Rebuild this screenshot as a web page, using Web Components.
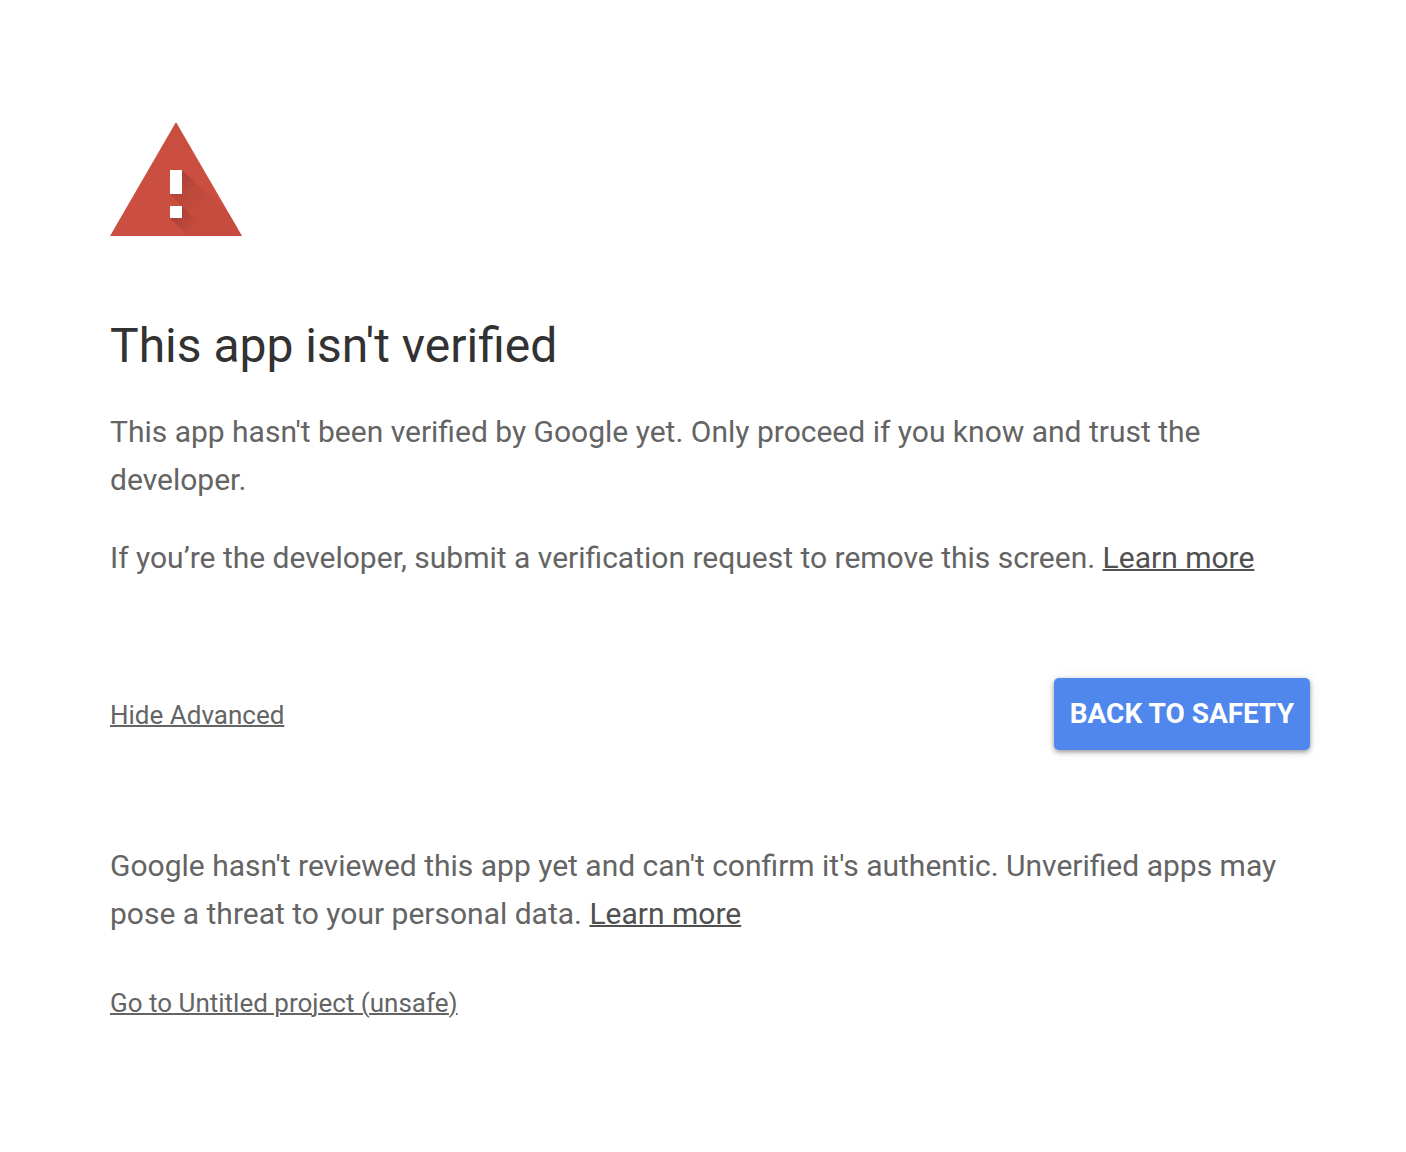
<!DOCTYPE html>
<html lang="en">
<head>
<meta charset="utf-8">
<meta name="viewport" content="width=device-width, initial-scale=1">
<title>This app isn't verified</title>
<style>
  body { margin: 0; background: #fff; color: #646464; font: 30px/48px Roboto, "Liberation Sans", sans-serif; }
</style>
</head>
<body>
<warning-page>
  <warning-icon slot="icon"></warning-icon>
  <span slot="title">This app isn't verified</span>
  <text-block>This app hasn't been verified by Google yet. Only proceed if you know and trust the developer.</text-block>
  <text-block>If you’re the developer, submit a verification request to remove this screen. <text-link>Learn more</text-link></text-block>
  <action-bar slot="actions">
    <text-toggle>Hide Advanced</text-toggle>
    <primary-button slot="primary">BACK TO SAFETY</primary-button>
  </action-bar>
  <text-block slot="details">Google hasn't reviewed this app yet and can't confirm it's authentic. Unverified apps may pose a threat to your personal data. <text-link>Learn more</text-link></text-block>
  <text-link slot="proceed" class="small">Go to Untitled project (unsafe)</text-link>
</warning-page>
<script>
const define = (name, html) => {
  const template = document.createElement('template');
  template.innerHTML = html;
  customElements.define(name, class extends HTMLElement {
    constructor() {
      super();
      this.attachShadow({ mode: 'open' }).append(template.content.cloneNode(true));
    }
  });
};

define('warning-page', `
  <style>
    :host { display: block; }
    main { display: flex; flex-direction: column; max-width: 1200px; padding: 122px 96px 110px 110px; }
    h1 { margin: 80px 0 32px; color: #323232; font-size: 48px; line-height: 60px; font-weight: 400; }
    .copy { display: flex; flex-direction: column; gap: 30px; }
    .actions { margin: 96px 0 92px; }
    .proceed { margin-top: 40px; }
  </style>
  <main>
    <slot name="icon"></slot>
    <h1><slot name="title"></slot></h1>
    <div class="copy"><slot></slot></div>
    <div class="actions"><slot name="actions"></slot></div>
    <slot name="details"></slot>
    <div class="proceed"><slot name="proceed"></slot></div>
  </main>`);

define('warning-icon', `
  <style>:host { display: block; } svg { display: block; }</style>
  <svg width="132" height="114" viewBox="0 0 132 114" role="img" aria-label="Warning">
    <defs>
      <linearGradient id="bar" gradientUnits="userSpaceOnUse" x1="66" y1="60" x2="90" y2="84">
        <stop offset="0" stop-color="#9f3d31" stop-opacity=".65"/>
        <stop offset=".3" stop-color="#a84034" stop-opacity=".55"/>
        <stop offset="1" stop-color="#b64336" stop-opacity=".25"/>
      </linearGradient>
      <linearGradient id="dot" gradientUnits="userSpaceOnUse" x1="66" y1="90" x2="84" y2="108">
        <stop offset="0" stop-color="#963a2f" stop-opacity=".75"/>
        <stop offset="1" stop-color="#b64336" stop-opacity=".25"/>
      </linearGradient>
    </defs>
    <path fill="#ca4f40" d="M66 0L132 114H0z"/>
    <path fill="url(#bar)" d="M72 48L120 93L132 114H102L60 72z"/>
    <path fill="url(#dot)" d="M72 84L102 114H78L60 96z"/>
    <path fill="#fff" d="M60 48h12v24H60zM60 84h12v12H60z"/>
  </svg>`);

define('text-block', `
  <style>:host { display: block; } p { margin: 0; }</style>
  <p><slot></slot></p>`);

define('text-link', `
  <style>
    :host { display: inline; color: #505050; }
    :host(.small) { font-size: 26px; color: #646464; }
    a { color: inherit; text-decoration: underline; text-decoration-thickness: 2px; }
  </style>
  <a href="#"><slot></slot></a>`);

define('text-toggle', `
  <style>
    :host { display: block; }
    button { padding: 0; border: 0; background: none; color: inherit; font: inherit; font-size: 26px; text-decoration: underline; text-decoration-thickness: 2px; cursor: pointer; }
  </style>
  <button type="button"><slot></slot></button>`);

define('primary-button', `
  <style>
    :host { display: block; }
    button { display: block; padding: 12px 16px; border: 0; border-radius: 5px; background: #5087ec; color: #fff; font: inherit; font-size: 28px; font-weight: 700; white-space: nowrap; box-shadow: 0 2px 5px rgba(0,0,0,.4), 0 0 16px rgba(0,0,0,.06); cursor: pointer; }
  </style>
  <button type="button"><slot></slot></button>`);

define('action-bar', `
  <style>:host { display: flex; justify-content: space-between; align-items: center; }</style>
  <slot></slot><slot name="primary"></slot>`);
</script>
</body>
</html>
